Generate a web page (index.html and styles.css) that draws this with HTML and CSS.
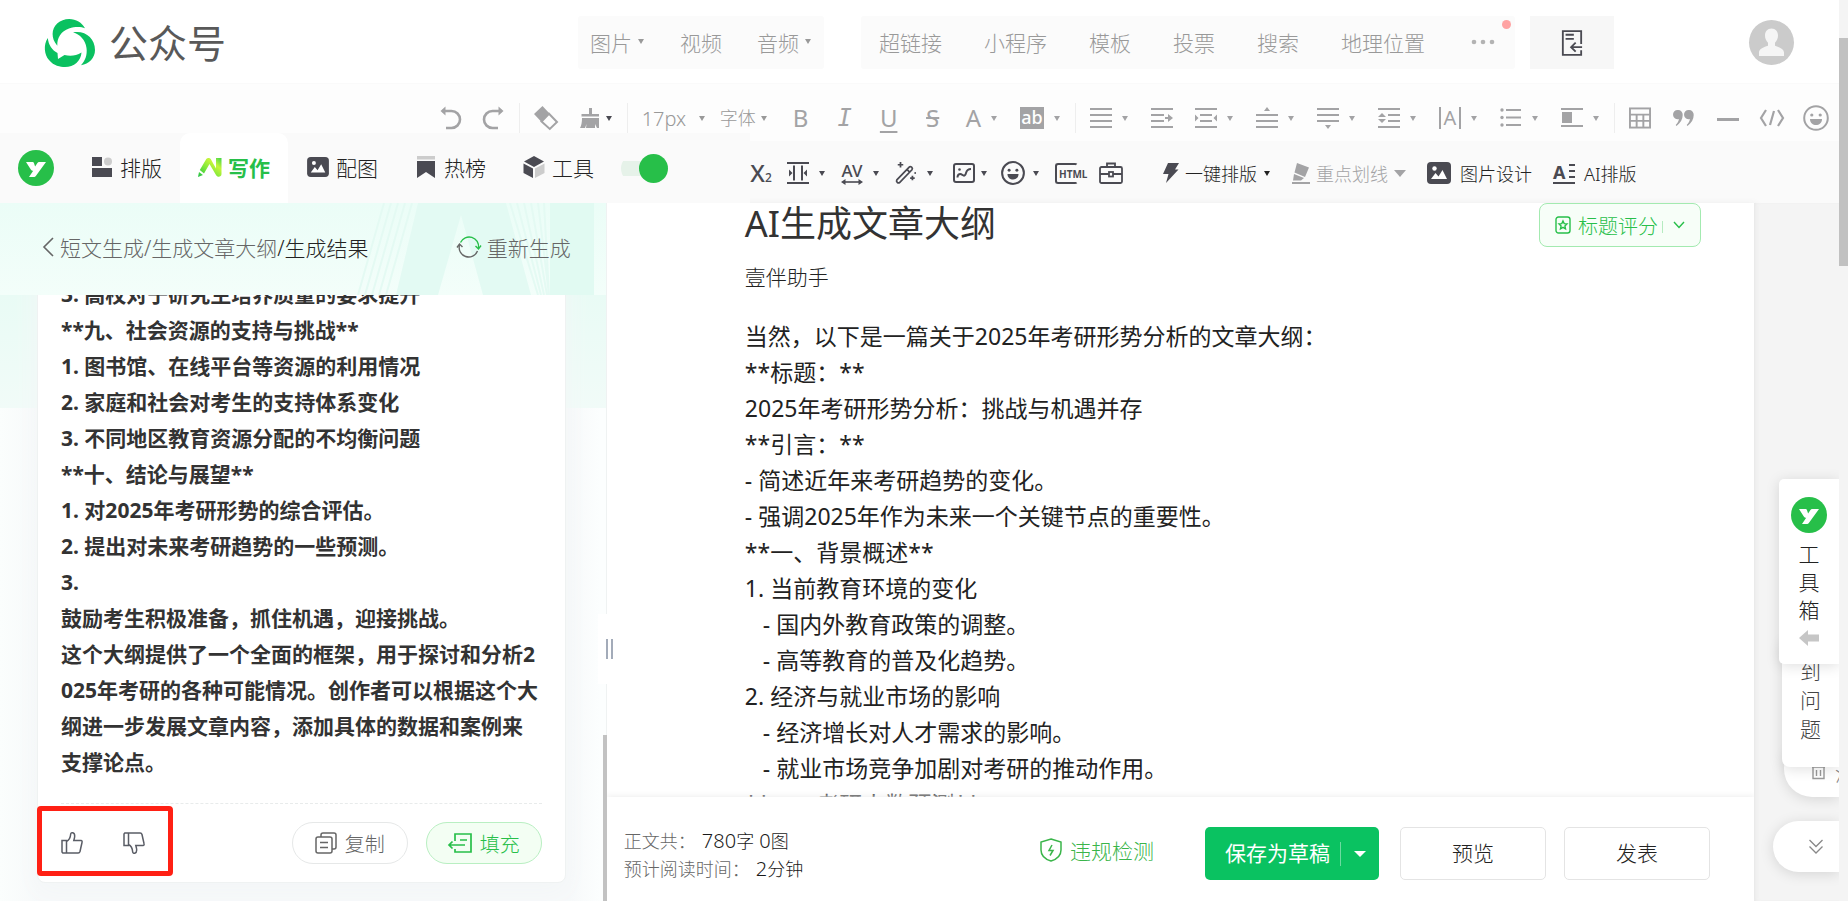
FILE: index.html
```html
<!DOCTYPE html>
<html lang="zh-CN">
<head>
<meta charset="utf-8">
<title>公众号 - AI生成文章大纲</title>
<link rel="stylesheet" href="styles.css">
</head>
<body>
<svg class="defs" aria-hidden="true">
  <symbol id="ylogo" viewBox="0 0 36 36">
    <circle cx="18" cy="18" r="18" fill="#27bf49"/>
    <path fill="#fff" d="M8 12h6.200c1 0 1.600.5 1.900 1.400l1 3 2-3c.7-1 1.500-1.400 2.600-1.400H28L18.200 25.500c-.8 1-1.500 1.500-2.700 1.500H11l4.200-6.200c-1.200 0-1.800-.4-2.400-1.300z"/>
  </symbol>
  <symbol id="photo" viewBox="0 0 24 22">
    <rect x="0" y="0" width="24" height="22" rx="4" fill="#4a4a52"/>
    <circle cx="7.500" cy="6.500" r="2.200" fill="#fff"/>
    <path d="M4 17l4.500-6 3 3.500L15.500 8 20 17z" fill="#fff"/>
  </symbol>
</svg>
<div class="page">
  <div class="app">
    <header class="header">
      <a class="brand" href="#">
        <svg width="50" height="48" viewBox="0 0 50 48" fill="#0ac160"><path d="M12.300 26.700C9 23 7.600 19 7.600 15 7.600 6.500 15 0 24.200 0 31 0 37 3.500 40 9.300 36 7.600 30 7.500 24 9.500 16 12 12 19 12.300 26.700z"/><path d="M28 13.300C40 11 50 19 50 31c0 8-6 14-14 15.300 4-4.300 6.500-10.300 5.500-17.300C40.500 21 35 15.500 28 13.300z"/><path d="M2.800 19C-2 26-.5 36 4 41c5 6 11 7 16 7 9 0 16-6 16.500-14.500-5.500 3.500-11.500 4-17 2.500L13 40l-.5-6C7 31 3.500 26 2.800 19z"/></svg>
        <span>公众号</span>
      </a>
      <nav class="group media">
        <button>图片<i class="caret"></i></button>
        <button>视频</button>
        <button>音频<i class="caret"></i></button>
      </nav>
      <nav class="group insert">
        <button>超链接</button><button>小程序</button><button>模板</button><button>投票</button><button>搜索</button><button>地理位置</button>
        <button class="more" aria-label="更多"><svg width="32" height="8" viewBox="0 0 32 8" fill="#b3b3b3"><circle cx="7" cy="4" r="2.300"/><circle cx="16" cy="4" r="2.300"/><circle cx="25" cy="4" r="2.300"/></svg></button>
        <i class="reddot"></i>
      </nav>
      <button class="export" aria-label="导入"><svg width="22" height="28" viewBox="0 0 24 30" fill="none" stroke="#4a4a52" stroke-width="2"><path d="M22 16V2H2v26h20v-5M5 6h9M5 10.500h9M23 19.500H12M16 14.500l-5 5 5 5"/></svg></button>
      <a class="avatar" href="#" aria-label="头像"><svg width="45" height="45" viewBox="0 0 45 45"><circle cx="22.500" cy="22.500" r="22.500" fill="#cbcbcb"/><path fill="#f5f5f5" d="M22.500 8.500c4 0 6.500 3 6.500 7 0 3-1.300 5.500-3 7.300v3c5 1.500 9 3.600 9 6.700v3.500H10v-3.500c0-3.100 4-5.200 9-6.700v-3c-1.700-1.800-3-4.300-3-7.300 0-4 2.500-7 6.500-7z"/></svg></a>
    </header>

    <div class="bar bar-main">
      <button aria-label="撤销"><svg width="22" height="24" viewBox="0 0 22 24" fill="none" stroke="currentColor" stroke-width="2.600"><path d="M3 5h9.500a8 8 0 0 1 0 17H7"/><path d="M6.500.5 1.500 5l5 4.500z" fill="currentColor" stroke="none"/></svg></button>
      <button aria-label="重做"><svg width="22" height="24" viewBox="0 0 22 24" fill="none" stroke="currentColor" stroke-width="2.600"><path d="M19 5H9.500a8 8 0 0 0 0 17H15"/><path d="M15.500.5l5 4.500-5 4.500z" fill="currentColor" stroke="none"/></svg></button>
      <i class="sep"></i>
      <button aria-label="清除格式"><svg width="24" height="24" viewBox="0 0 24 24"><path d="M8.500 0 0 8l7.500 8 8-8.500z" fill="currentColor"/><path d="M7.500 15.500l7.500-7.700 8 8.200-7.200 7z" fill="none" stroke="currentColor" stroke-width="2"/></svg></button>
      <button class="tight" aria-label="格式刷"><svg width="20" height="20" viewBox="0 0 20 20" fill="currentColor"><path d="M9 0h3v6h7v2.500H1.500V6H9zM2 10h17v10H6l.5-4-1.500 4H0c1.500-2.500 2-6 2-10zM15 16v4h2z"/></svg><i class="caret dark"></i></button>
      <i class="sep"></i>
      <label class="pick size"><select aria-label="字号"><option>17px</option></select><i class="caret"></i></label>
      <label class="pick font"><select aria-label="字体"><option>字体</option></select><i class="caret"></i></label>
      <button class="letter">B</button>
      <button class="letter it">I</button>
      <button class="letter un">U</button>
      <button class="letter st">S</button>
      <button class="letter">A<i class="caret"></i></button>
      <button><span class="ab">ab</span><i class="caret"></i></button>
      <i class="sep"></i>
      <button aria-label="对齐"><svg width="22" height="22" viewBox="0 0 22 22" stroke="currentColor" stroke-width="2.200"><path d="M0 2h22M0 8h22M0 14h22M0 20h22"/></svg><i class="caret"></i></button>
      <button aria-label="首行缩进"><svg width="22" height="22" viewBox="0 0 22 22" stroke="currentColor" stroke-width="2.200"><path d="M0 2h22M0 8h13M0 14h13M0 20h22M14 11h6"/><path d="M17 7l5 4-5 4z" fill="currentColor" stroke="none"/></svg></button>
      <button aria-label="两端缩进"><svg width="22" height="22" viewBox="0 0 22 22" stroke="currentColor" stroke-width="2.200"><path d="M0 2h22M5 8h12M5 14h12M0 20h22"/><path d="M0 7.500l3.500 3.500L0 14.500zM22 7.500L18.500 11l3.500 3.500z" fill="currentColor" stroke="none"/></svg><i class="caret"></i></button>
      <button aria-label="段前距"><svg width="22" height="22" viewBox="0 0 22 22" stroke="currentColor" stroke-width="2.200"><path d="M0 8h22M0 14h22M0 20h22"/><path d="M8 4l3-4 3 4z" fill="currentColor" stroke="none"/></svg><i class="caret"></i></button>
      <button aria-label="段后距"><svg width="22" height="22" viewBox="0 0 22 22" stroke="currentColor" stroke-width="2.200"><path d="M0 2h22M0 8h22M0 14h22"/><path d="M8 18l3 4 3-4z" fill="currentColor" stroke="none"/></svg><i class="caret"></i></button>
      <button aria-label="行间距"><svg width="22" height="22" viewBox="0 0 22 22" stroke="currentColor" stroke-width="2.200"><path d="M0 2h22M10 8h12M10 14h12M0 20h22"/><path d="M0 10l4-4 4 4zM0 12l4 4 4-4z" fill="currentColor" stroke="none"/></svg><i class="caret"></i></button>
      <button><span class="spaced">A</span><i class="caret"></i></button>
      <button aria-label="列表"><svg width="22" height="22" viewBox="0 0 22 22" stroke="currentColor" stroke-width="2.200"><path d="M6 3h15M6 10.500h15M6 18h15"/><g fill="currentColor" stroke="none"><circle cx="2" cy="3" r="1.700"/><circle cx="2" cy="10.500" r="1.700"/><circle cx="2" cy="18" r="1.700"/></g></svg><i class="caret"></i></button>
      <button aria-label="图文混排"><svg width="22" height="22" viewBox="0 0 22 22" stroke="currentColor" stroke-width="2"><path d="M0 2h22M0 19h22"/><rect x="1" y="5" width="10" height="11" fill="currentColor" stroke="none"/></svg><i class="caret"></i></button>
      <i class="sep"></i>
      <button aria-label="表格"><svg width="22" height="22" viewBox="0 0 23 22" fill="none" stroke="currentColor" stroke-width="2"><rect x="1" y="1" width="21" height="20"/><path d="M1 7.500h21M1 14h21M8 7.500V21M15 7.500V21"/></svg></button>
      <button aria-label="引用"><svg width="22" height="18" viewBox="0 0 22 18" fill="currentColor"><path d="M5 1a4.600 4.600 0 0 1 4.700 5c0 4-2.200 8-6.200 11l-.8-1c2-2 3-4 3.200-6A4.600 4.600 0 1 1 5 1zM16 1a4.600 4.600 0 0 1 4.700 5c0 4-2.200 8-6.200 11l-.8-1c2-2 3-4 3.200-6A4.600 4.600 0 1 1 16 1z"/></svg></button>
      <button aria-label="分隔线"><svg width="22" height="22" viewBox="0 0 22 22" stroke="currentColor" stroke-width="3"><path d="M0 12.500h22"/></svg></button>
      <button class="snug" aria-label="代码"><svg width="26" height="18" viewBox="0 0 26 18" fill="none" stroke="currentColor" stroke-width="2.200"><path d="M7 1 2 9l5 8M19 1l5 8-5 8M15 2l-4 14"/></svg></button>
      <button class="snug" aria-label="表情"><svg width="26" height="26" viewBox="0 0 26 26"><circle cx="13" cy="13" r="11.800" fill="none" stroke="currentColor" stroke-width="2"/><circle cx="8.800" cy="10" r="1.600" fill="currentColor"/><circle cx="17.200" cy="10" r="1.600" fill="currentColor"/><path d="M7 14h12c0 4-3 6-6 6s-6-2-6-6z" fill="currentColor"/></svg></button>
    </div>

    <div class="tabs-row">
      <nav class="tabs">
        <svg class="ylogo" width="36" height="36"><use href="#ylogo"/></svg>
        <button><svg width="24" height="22" viewBox="0 0 24 22"><path d="M2 1h10v9H2zM2 12h20v9H2z" fill="#4a4a52"/><circle cx="18" cy="5.500" r="4" fill="#ccc"/></svg>排版</button>
        <button class="on"><svg width="24" height="20" viewBox="0 0 24 20" fill="none"><defs><linearGradient id="pen" x1="0" y1="1" x2="1" y2="0"><stop offset="0" stop-color="#1fbf45"/><stop offset=".4" stop-color="#7fe83a"/><stop offset=".7" stop-color="#c6f53a"/><stop offset="1" stop-color="#3fd64a"/></linearGradient></defs><path d="M0 20l1-5 4 3zM1.800 13 8 2.500C9 .5 12 .5 13 2.500l5 9V1h5.500v16c0 3-4 4-5.500 1L11.500 7 6 16.500z" fill="url(#pen)"/></svg>写作</button>
        <button><svg width="24" height="20"><use href="#photo"/></svg>配图</button>
        <button><svg width="24" height="22" viewBox="0 0 24 22"><path d="M3 0h18v3.500H3z" fill="#ccc"/><path d="M3 5h18v17l-9-6-9 6z" fill="#4a4a52"/></svg>热榜</button>
        <button><svg width="24" height="24" viewBox="0 0 24 24"><path d="M12 1l10 5.500L12 12 2 6.500zM1.500 8.500 11 13.500V23l-9.500-5z" fill="#4a4a52"/><path d="M22.500 8.500 13 13.500V23l9.500-5z" fill="#ccc"/></svg>工具</button>
        <input class="toggle" type="checkbox" checked aria-label="启用插件">
      </nav>
      <div class="bar bar-extra">
        <button class="sub">X<sub>2</sub></button>
        <button aria-label="页边距"><svg width="22" height="22" viewBox="0 0 22 22" stroke="currentColor" stroke-width="2"><path d="M0 1h22M0 21h22M7 3.500v15M15 3.500v15"/><path d="M2 7.500 5.500 11 2 14.500zM20 7.500 16.500 11l3.500 3.500z" fill="currentColor" stroke="none"/></svg><i class="caret"></i></button>
        <button><span class="av">AV<svg width="22" height="6" viewBox="0 0 22 6"><path d="M3 3h16" stroke="currentColor" stroke-width="1.600"/><path d="M4.500 0 0 3l4.500 3zM17.500 0 22 3l-4.500 3z" fill="currentColor"/></svg></span><i class="caret"></i></button>
        <button aria-label="魔法棒"><svg width="22" height="22" viewBox="0 0 24 24" fill="none" stroke="currentColor" stroke-width="1.900"><path d="M2 19.500 15.500 5.500c1.500-1.500 4.500 1 3 3L5 22.500c-1.600 1.200-4.200-1.200-3-3zM13 8l3 3M6 0v6M3 3h6M19 15v5M16.500 17.500h5"/><circle cx="22" cy="12" r="1" fill="currentColor" stroke="none"/></svg><i class="caret"></i></button>
        <button class="tight" aria-label="图表"><svg width="22" height="20" viewBox="0 0 22 20" fill="none" stroke="currentColor" stroke-width="2"><rect x="1" y="1" width="20" height="18" rx="2"/><path d="M4.500 14.500c0-4 3-4 5-2.500s3 0 3.500-2 1.500-4 5-4"/><circle cx="6.500" cy="6.500" r="1.300" fill="currentColor" stroke="none"/></svg><i class="caret"></i></button>
        <button class="snug" aria-label="表情符号"><svg width="24" height="24" viewBox="0 0 26 26"><circle cx="13" cy="13" r="11.800" fill="none" stroke="currentColor" stroke-width="2.200"/><circle cx="8.800" cy="10" r="1.600" fill="currentColor"/><circle cx="17.200" cy="10" r="1.600" fill="currentColor"/><path d="M7 14h12c0 4-3 6-6 6s-6-2-6-6z" fill="currentColor"/></svg><i class="caret"></i></button>
        <button class="html"><span>HTML</span></button>
        <button aria-label="工具箱"><svg width="24" height="22" viewBox="0 0 24 22" fill="none" stroke="currentColor" stroke-width="1.800"><rect x="1" y="5" width="22" height="16" rx="1.500"/><path d="M8 5V1.500h8V5M1 12h9M14 12h9"/><rect x="10" y="10" width="4" height="4.500"/></svg></button>
        <button class="wide first"><svg width="16" height="20" viewBox="0 0 16 20" fill="currentColor"><path d="M5 0h11l-4 6.500h3.500L3 20l2.500-9H0z"/></svg>一键排版<i class="caret"></i></button>
        <button class="wide muted"><svg width="18" height="21" viewBox="0 0 18 21" fill="currentColor"><path d="M5 0l12 4.500L13 14 2.500 9.500zM2 11l10 4-3 2.500H1z"/><path d="M0 19h18v2H0z"/></svg>重点划线<i class="caret big"></i></button>
        <button class="wide pic"><svg width="24" height="22"><use href="#photo"/></svg>图片设计</button>
        <button class="wide pic"><span class="ae">A<svg width="22" height="21" viewBox="0 0 22 21" stroke="currentColor" stroke-width="2.200"><path d="M16 2h6M16 8h6M16 14h6M0 20h22"/></svg></span>AI排版</button>
      </div>
    </div>

    <div class="body">
      <aside class="panel">
        <div class="crumbs">
          <svg class="deco" width="210" height="92" viewBox="0 0 210 92" preserveAspectRatio="none"><path d="M22 0h88l25 92H87L65 12 42 92H0z" fill="#e3faf3"/><path d="M154 0h44v92h-44z" fill="#e1faf2"/><path d="M114 0l28 92M121 0l24 92M128 0l20 92M135 0l16 92M142 0l11 92M148 0l5 92M16 0-10 92M9 0-17 92M2 0-24 92M-5 0-31 92M-12 0-38 92" stroke="#e4faf3" stroke-width="2"/></svg>
          <a class="trail" href="#"><svg width="12" height="22" viewBox="0 0 12 22" fill="none" stroke="#666" stroke-width="1.600"><path d="M11 2 2 11l9 9"/></svg><span>短文生成/生成文章大纲<b>/生成结果</b></span></a>
          <button class="again"><svg width="24" height="22" viewBox="0 0 24 22" fill="none" stroke-width="1.400"><path d="M3.500 6.500A9.500 9.500 0 0 1 21.500 12" stroke="#27bf49"/><path d="M18.500 10l3 3 2.500-3.500" stroke="#27bf49"/><path d="M20.500 15A9.500 9.500 0 0 1 2.500 9" stroke="#666"/><path d="M0 11.500 2.500 8l3 3" stroke="#666"/></svg>重新生成</button>
        </div>
        <div class="scroll">
          <article class="card">
            <div class="result">
              <p>3. 高校对于研究生培养质量的要求提升</p>
              <p>**九、社会资源的支持与挑战**</p>
              <p>1. 图书馆、在线平台等资源的利用情况</p>
              <p>2. 家庭和社会对考生的支持体系变化</p>
              <p>3. 不同地区教育资源分配的不均衡问题</p>
              <p>**十、结论与展望**</p>
              <p>1. 对2025年考研形势的综合评估。</p>
              <p>2. 提出对未来考研趋势的一些预测。</p>
              <p>3.</p>
              <p>鼓励考生积极准备，抓住机遇，迎接挑战。</p>
              <p>这个大纲提供了一个全面的框架，用于探讨和分析2025年考研的各种可能情况。创作者可以根据这个大纲进一步发展文章内容，添加具体的数据和案例来支撑论点。</p>
            </div>
            <footer class="actions">
              <div class="votes">
                <button aria-label="赞"><svg width="22" height="22" viewBox="0 0 22 22" fill="none" stroke="#5a5d66" stroke-width="1.500"><path d="M1 8.500h4.500V21H1.800L1 20zM5.500 9.500C8.500 8 9.500 5 9.700 2c.2-2 4-1.800 4 2 0 1.500-.5 3-.9 4.500H20c1 0 1.300.8 1 2l-2 9c-.3 1-.8 1.500-1.800 1.500H5.500"/></svg></button>
                <button aria-label="踩"><svg width="22" height="22" viewBox="0 0 22 22" fill="none" stroke="#5a5d66" stroke-width="1.500"><path d="M1 13.500h4.500V1H1.800L1 2zM5.500 12.500c3 1.500 4 4.500 4.200 7.500.2 2 4 1.800 4-2 0-1.500-.5-3-.9-4.500H20c1 0 1.300-.8 1-2l-2-9C18.700 1.500 18.200 1 17.200 1H5.500"/></svg></button>
              </div>
              <button class="pill"><svg width="22" height="22" viewBox="0 0 22 22" fill="none" stroke="currentColor" stroke-width="1.500"><path d="M6 5V3a2 2 0 0 1 2-2h11a2 2 0 0 1 2 2v12a2 2 0 0 1-2 2h-2"/><rect x="1" y="5" width="16" height="16" rx="2"/><path d="M5 10.500h8M5 15.500h8"/></svg>复制</button>
              <button class="pill green"><svg width="24" height="20" viewBox="0 0 24 20" fill="none" stroke="currentColor" stroke-width="1.700"><path d="M7 8V1h16v18H7v-3M1 12h16M4.500 8.500 1 12l3.500 3.500M12 7h7"/></svg>填充</button>
            </footer>
            <i class="mark"></i>
          </article>
        </div>
        <i class="thumb"></i>
        <i class="split"></i>
      </aside>

      <main class="editor">
        <div class="paper">
          <div class="text">
            <h1>AI生成文章大纲</h1>
            <p class="author">壹伴助手</p>
            <div class="content">当然，以下是一篇关于2025年考研形势分析的文章大纲：
**标题：**
2025年考研形势分析：挑战与机遇并存
**引言：**
- 简述近年来考研趋势的变化。
- 强调2025年作为未来一个关键节点的重要性。
**一、背景概述**
1. 当前教育环境的变化
   - 国内外教育政策的调整。
   - 高等教育的普及化趋势。
2. 经济与就业市场的影响
   - 经济增长对人才需求的影响。
   - 就业市场竞争加剧对考研的推动作用。
**二、考研人数预测**</div>
          </div>
          <button class="score"><svg width="16" height="18" viewBox="0 0 16 18" fill="none" stroke="currentColor" stroke-width="1.400"><rect x="1" y="1" width="14" height="16" rx="2.500"/><path d="M8 5l1.200 2.600 2.800.3-2.100 2 .6 2.900L8 11.400l-2.500 1.400.6-2.900-2.100-2 2.800-.3z"/></svg><span>标题评分</span><svg width="12" height="8" viewBox="0 0 12 8" fill="none" stroke="currentColor" stroke-width="1.400"><path d="M1 1l5 5.500L11 1"/></svg></button>
        </div>
        <footer class="bottom">
          <div class="stats">
            <p>正文共：<b>780<small>字</small> 0<small>图</small></b></p>
            <p>预计阅读时间：<b>2<small>分钟</small></b></p>
          </div>
          <a class="check" href="#"><svg width="22" height="24" viewBox="0 0 22 24" fill="none" stroke="currentColor" stroke-width="1.500"><path d="M11 1l10 3v8c0 6-5 9.500-10 11C6 21.500 1 18 1 12V4z"/><path d="M12 7l-3 5.500h4L10 17.500"/></svg>违规检测</a>
          <div class="save"><button>保存为草稿</button><button class="drop" aria-label="更多保存选项"><i class="caret big"></i></button></div>
          <button class="plain">预览</button>
          <button class="plain last">发表</button>
        </footer>
      </main>
      <div class="gutter"></div>
    </div>

    <div class="float clear"><svg width="13" height="16" viewBox="0 0 13 16" fill="none" stroke="#999" stroke-width="1.400"><path d="M0 3h13M1 3v11.500h11V3M4.500 6v6M8.500 6v6M4 1h5"/></svg><span>清</span></div>
    <div class="float issue"><span>到</span><span>问</span><span>题</span></div>
    <div class="float toolbox"><svg width="36" height="36"><use href="#ylogo"/></svg><span>工</span><span>具</span><span>箱</span><svg class="arrow" width="20" height="16" viewBox="0 0 20 16" fill="#c6c6c6"><path d="M0 8l9-8v4.500h11v7H9V16z"/></svg></div>
    <button class="float down" aria-label="收起"><svg width="14" height="15" viewBox="0 0 14 15" fill="none" stroke="#888" stroke-width="1.300"><path d="M.5 1 7 7.500 13.500 1M.5 7.500 7 14l6.500-6.500"/></svg></button>
  </div>
  <div class="rail"><i></i></div>
</div>
</body>
</html>
```

FILE: styles.css
```css
*, *::before { box-sizing: border-box; }
body { margin: 0; font-family: "Noto Sans", "Noto Sans CJK SC", sans-serif; font-weight: 300; color: #333; background: #fff; }
button, select, input { font: inherit; color: inherit; margin: 0; padding: 0; border: 0; background: none; }
button { cursor: pointer; display: flex; align-items: center; white-space: nowrap; }
a { color: inherit; text-decoration: none; }
p, h1 { margin: 0; }
svg { display: block; flex: none; overflow: visible; }
.defs { position: absolute; width: 0; height: 0; }

.page { display: flex; height: 100vh; overflow: hidden; }
.app { flex: 1; min-width: 0; display: flex; flex-direction: column; position: relative; overflow: hidden; }
.rail { flex: 0 0 9px; background: #f4f4f4; padding-top: 38px; }
.rail i { display: block; height: 228px; background: #c1c1c1; }

.caret { flex: none; width: 0; height: 0; margin: 0 1px; border: 3px solid transparent; border-top: 5px solid currentColor; border-bottom: 0; }
.caret.big { margin: 0; border-width: 6px; border-top-width: 7px; border-bottom: 0; }

.header { display: flex; align-items: center; flex: 0 0 83px; padding-right: 45px; padding-top: 2px; }
.brand { display: flex; align-items: center; gap: 14px; flex: 0 0 578px; padding-left: 45px; font-size: 39px; line-height: 48px; font-weight: 400; color: #595959; }
.group { display: flex; align-items: center; height: 53px; border-radius: 3px; background: #fbfbfb; font-size: 21px; color: #999; position: relative; }
.group button { gap: 5px; padding-bottom: 2px; }
.media { gap: 35px; padding: 0 12px; }
.insert { gap: 42px; padding: 0 16px 0 18px; margin-left: 37px; }
.reddot { position: absolute; right: 4px; top: 4px; width: 9px; height: 9px; border-radius: 50%; background: #ffa3a3; }
.export { width: 84px; height: 53px; justify-content: center; margin-left: 15px; background: #f7f7f7; }
.avatar { margin-left: auto; }

.bar { display: flex; align-items: center; }
.bar button { flex: none; min-width: 22px; gap: 9px; justify-content: center; }
.bar .snug svg { margin: 0 -2px; }
.bar-main { flex: 0 0 58px; padding: 11px 12px 0 0; gap: 22px; justify-content: flex-end; background: #fdfdfd; border-top: 1px solid #fafafa; color: #a3a3a5; }
.bar button.tight { gap: 5px; }
.caret.dark { color: #4a4a52; }
.sep { flex: none; width: 1px; height: 30px; margin: 0 -8px; background: #eee; }
.pick { display: flex; align-items: center; font-size: 18px; color: #999; }
.pick select { appearance: none; outline: 0; }
.size { margin-right: -8px; }
.size select { width: 56px; font-size: 20px; }
.font select { width: 40px; }
.bar .letter { font-size: 24px; line-height: 28px; font-weight: 400; }
.it { font-family: "DejaVu Sans Mono", monospace; font-style: italic; }
.un { text-decoration: underline; text-underline-offset: 4px; }
.st { text-decoration: line-through; }
.ab { display: block; width: 24px; height: 22px; line-height: 20px; text-align: center; background: #a3a3a5; color: #fff; font-size: 18px; font-weight: 500; }
.spaced { width: 22px; height: 22px; border: solid currentColor; border-width: 0 2px; line-height: 22px; text-align: center; font-size: 20px; font-weight: 400; }

.tabs-row { display: flex; align-items: flex-end; flex: 0 0 62px; }
.tabs { flex: 0 0 750px; height: 70px; margin-top: -8px; display: flex; align-items: center; padding-left: 18px; background: #fafafa; z-index: 1; }
.ylogo { margin-right: 18px; }
.tabs button { width: 108px; height: 70px; gap: 6px; padding-bottom: 2px; justify-content: center; font-size: 21px; color: #222; }
.tabs .on { background: #fff; border-radius: 10px 10px 0 0; color: #27bf49; font-weight: 700; }
.toggle { appearance: none; width: 47px; height: 29px; margin-left: 9px; border-radius: 15px; position: relative; background: linear-gradient(#e6f2e9, #e6f2e9) 0 7px / 34px 15px no-repeat; }
.toggle::before { content: ""; position: absolute; right: 0; top: 0; width: 29px; height: 29px; border-radius: 50%; background: #27bf49; }
.bar-extra { flex: 1; min-width: 0; height: 62px; gap: 15px; background: #fafafa; color: #4a4a52; padding-top: 2px; }
.bar-extra .tight { width: 39px; justify-content: flex-end; }
.sub { font-size: 24px; line-height: 28px; font-weight: 500; }
.bar .sub { gap: 0; align-items: baseline; width: 22px; }
.sub sub { font-size: 12px; line-height: 12px; }
.av { display: block; width: 22px; text-align: center; font-size: 17px; line-height: 17px; font-weight: 500; }
.html { width: 29px; height: 21px; }
.html span { width: 23px; height: 21px; border: 2px solid; border-right-color: transparent; border-radius: 3px; font-size: 10px; line-height: 18px; font-weight: 700; padding-left: 2px; }
.bar .html { justify-content: flex-start; }
.bar .wide { gap: 6px; font-size: 18px; color: #222; margin-right: 6px; }
.bar .first { margin-left: 25px; }
.bar .muted { color: #a3a3a5; }
.bar .pic { gap: 9px; }
.wide svg { color: #4a4a52; }
.bar .muted svg { color: #a3a3a5; }
.ae { position: relative; width: 22px; height: 21px; font-size: 18px; line-height: 18px; font-weight: 700; text-align: left; color: #4a4a52; }
.ae svg { position: absolute; left: 0; top: 0; }

.body { flex: 1; min-height: 0; display: flex; }
.panel { flex: 0 0 33%; display: flex; flex-direction: column; position: relative; border-right: 1px solid #eff2f2; background: linear-gradient(90deg, #fbfefd 0, #f7f9fa 40px, #f7f9fa 94%, #fcfefe 99%); }
.crumbs { flex: 0 0 92px; display: flex; align-items: center; justify-content: space-between; padding: 0 35px 4px 42px; position: relative; font-size: 21px; background: linear-gradient(#ebfdf7, #f3fefa); }
.deco { position: absolute; right: 0; top: 0; }
.trail, .again { position: relative; display: flex; align-items: center; gap: 6px; color: #666; }
.trail b { font-weight: 300; color: #222; }
.scroll { flex: 1; min-height: 0; overflow: hidden; display: flex; flex-direction: column; justify-content: flex-end; padding: 0 40px 18px 37px; background: linear-gradient(#e9fbf5, #f1fbf8) 0 0 / 100% 113px no-repeat; }
.card { position: relative; flex: none; padding: 18px 23px; border: 1px solid #eff2f2; border-radius: 8px; background: #fff; box-shadow: 0 8px 24px #f3f6f7; }
.result { padding-bottom: 23px; font-size: 21px; line-height: 36px; font-weight: 700; word-break: break-all; color: #333; }
.actions { display: flex; align-items: center; gap: 18px; padding-top: 18px; border-top: 1px dashed #e8ebeb; }
.votes { display: flex; gap: 40px; margin-right: auto; }
.pill { width: 116px; height: 42px; justify-content: center; gap: 8px; border: 1px solid #e6e8e8; border-radius: 21px; font-size: 20px; color: #666; }
.pill.green { border-color: #b9efc2; background: #f3fef3; color: #27bf49; }
.mark { position: absolute; left: -1px; bottom: 6px; width: 136px; height: 70px; border: 5px solid #ff2014; border-radius: 4px; pointer-events: none; }
.thumb { position: absolute; right: -1px; bottom: 0; width: 4px; height: 166px; background: #c2c2c2; }
.split { position: absolute; right: -14px; top: 411px; width: 22px; height: 70px; background: #fff; z-index: 1; }
.split::before { content: ""; position: absolute; left: 8px; top: 25px; width: 7px; height: 20px; border: solid #a3abb9; border-width: 0 2px; }

.editor { flex: 1; min-width: 0; display: flex; flex-direction: column; box-shadow: 4px 0 8px -2px #e6e6e6; background: #fff; }
.paper { flex: 1; min-height: 0; overflow: hidden; display: flex; justify-content: space-between; align-items: flex-start; padding: 0 53px 0 138px; background: #fff; }
.text { font-weight: 400; }
.text h1 { font-size: 36px; line-height: 42px; font-weight: 400; color: #333; margin-bottom: 18px; }
.author { font-size: 21px; line-height: 28px; margin-bottom: 27px; font-weight: 300; color: #222; }
.content { font-size: 23px; line-height: 36px; white-space: pre; color: #222; }
.score { height: 44px; padding: 0 15px; gap: 7px; border: 1px solid #a3eab0; border-radius: 8px; background: #f7fef8; color: #27bf49; font-size: 20px; }
.score span { padding-right: 5px; margin-right: 3px; background: linear-gradient(#b5ebc0, #b5ebc0) 100% 60% / 1px 12px no-repeat; }
.bottom { flex: 0 0 104px; display: flex; align-items: flex-start; padding: 30px 44px 0 17px; background: #fff; box-shadow: 0 -1px 6px #eee; }
.stats { margin-right: auto; font-size: 18px; line-height: 28px; color: #666; }
.stats b { font-size: 20px; font-weight: 300; color: #191919; margin-left: 6px; }
.stats small { font-size: 18px; }
.check { display: flex; align-items: center; gap: 8px; height: 46px; margin-right: 51px; font-size: 21px; color: #3ab54a; }
.save { display: flex; height: 53px; margin-right: 21px; border-radius: 5px; background: #0ac261; color: #fff; font-size: 21px; font-weight: 400; }
.save button { padding: 0 10px 3px 20px; }
.save .drop { width: 39px; padding: 0; justify-content: center; background: linear-gradient(#6cdba0, #6cdba0) 0 50% / 1px 24px no-repeat; }
.save .caret { border-width: 5px 6px 0; border-top-width: 6px; }
.plain { width: 146px; height: 53px; padding-bottom: 3px; justify-content: center; border: 1px solid #e4e4e4; border-radius: 5px; font-size: 21px; color: #222; }
.last { margin-left: 18px; }
.gutter { flex: 0 0 85px; background: #f4f4f4; box-shadow: inset 4px 0 5px -3px #e4e4e4; }

.float { position: absolute; right: 0; background: #fff; display: flex; box-shadow: 0 2px 14px rgba(0, 0, 0, .13); font-size: 21px; z-index: 2; }
.toolbox { top: 479px; width: 60px; height: 185px; flex-direction: column; align-items: center; padding-top: 18px; border-radius: 5px 0 0 5px; line-height: 28px; color: #222; }
.toolbox svg:first-child { margin-bottom: 7px; }
.toolbox .arrow { margin-top: 6px; }
.issue { top: 640px; width: 57px; height: 127px; flex-direction: column; align-items: center; padding-top: 17px; border-radius: 5px 0 0 8px; line-height: 29px; color: #444; }
.clear { top: 740px; width: 55px; height: 57px; padding: 7px 0 0 28px; gap: 10px; align-items: center; border-radius: 28px 0 0 28px; color: #888; overflow: hidden; }
.down { top: 821px; width: 66px; height: 51px; padding-left: 36px; border-radius: 26px 0 0 26px; }
```
